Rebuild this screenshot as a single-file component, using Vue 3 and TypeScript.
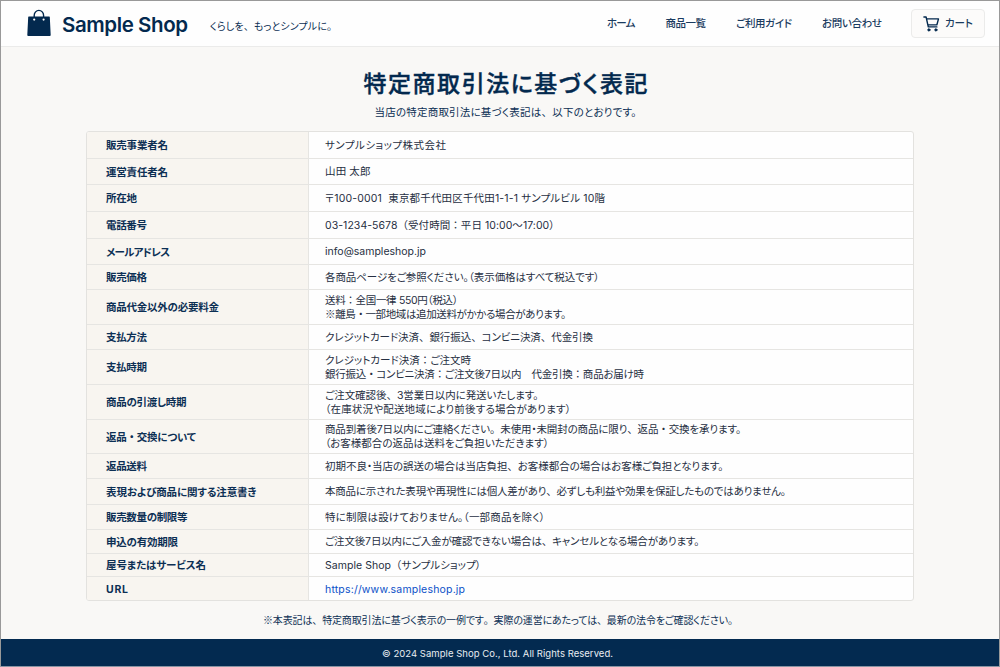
<script setup lang="ts">
import { h, withDirectives } from 'vue'
import type { Directive, FunctionalComponent } from 'vue'

interface Line {
  text: string
  width: number
  href?: string
}

interface Row {
  label: string
  labelWidth: number
  height: number
  lines: Line[]
}

// Tracks a line of text out (or in) so that it sets to the given measure.
const vFit: Directive<HTMLElement, number> = {
  mounted(el, { value }) {
    const gaps = Array.from(el.textContent ?? '').length - 1
    if (gaps < 1) return
    const spacing = (value - el.getBoundingClientRect().width) / gaps
    el.style.letterSpacing = `${spacing.toFixed(4)}px`
    el.style.marginRight = `${(-spacing).toFixed(4)}px`
  },
}

const WIDE = /(、|。(?!（|$)|(?<=[0-9a-z])（|：|(?<=[島込品])・|※)/

const FitText: FunctionalComponent<{ text: string; width: number }> = (props) => {
  const parts = props.text.split(WIDE).filter(Boolean)
  return withDirectives(
    h('span', { class: 'fit-text' }, parts.map((part) => h('span', { class: { wide: /^[、。（：・※]$/.test(part) } }, part))),
    [[vFit, props.width]],
  )
}
FitText.props = ['text', 'width']

const nav: Line[] = [
  { text: 'ホーム', width: 28.5 },
  { text: '商品一覧', width: 40.5 },
  { text: 'ご利用ガイド', width: 56 },
  { text: 'お問い合わせ', width: 60 },
]

const rows: Row[] = [
  { label: '販売事業者名', labelWidth: 62, height: 27, lines: [{ text: 'サンプルショップ株式会社', width: 121 }] },
  { label: '運営責任者名', labelWidth: 62, height: 26, lines: [{ text: '山田 太郎', width: 45.5 }] },
  { label: '所在地', labelWidth: 31, height: 27, lines: [{ text: '〒100-0001  東京都千代田区千代田1-1-1 サンプルビル 10階', width: 280 }] },
  { label: '電話番号', labelWidth: 41, height: 27, lines: [{ text: '03-1234-5678（受付時間：平日 10:00〜17:00）', width: 229.5 }] },
  { label: 'メールアドレス', labelWidth: 64, height: 26, lines: [{ text: 'info@sampleshop.jp', width: 101 }] },
  { label: '販売価格', labelWidth: 41, height: 25, lines: [{ text: '各商品ページをご参照ください。（表示価格はすべて税込です）', width: 274.5 }] },
  {
    label: '商品代金以外の必要料金', labelWidth: 113, height: 35,
    lines: [
      { text: '送料：全国一律 550円（税込）', width: 133 },
      { text: '※離島・一部地域は追加送料がかかる場合があります。', width: 241 },
    ],
  },
  { label: '支払方法', labelWidth: 41, height: 25, lines: [{ text: 'クレジットカード決済、銀行振込、コンビニ決済、代金引換', width: 268 }] },
  {
    label: '支払時期', labelWidth: 41, height: 35,
    lines: [
      { text: 'クレジットカード決済：ご注文時', width: 146 },
      { text: '銀行振込・コンビニ決済：ご注文後7日以内　代金引換：商品お届け時', width: 319 },
    ],
  },
  {
    label: '商品の引渡し時期', labelWidth: 80.5, height: 35,
    lines: [
      { text: 'ご注文確認後、3営業日以内に発送いたします。', width: 213.5 },
      { text: '（在庫状況や配送地域により前後する場合があります）', width: 246 },
    ],
  },
  {
    label: '返品・交換について', labelWidth: 90, height: 34,
    lines: [
      { text: '商品到着後7日以内にご連絡ください。未使用・未開封の商品に限り、返品・交換を承ります。', width: 416 },
      { text: '（お客様都合の返品は送料をご負担いただきます）', width: 224 },
    ],
  },
  { label: '返品送料', labelWidth: 41, height: 25, lines: [{ text: '初期不良・当店の誤送の場合は当店負担、お客様都合の場合はお客様ご負担となります。', width: 398.5 }] },
  { label: '表現および商品に関する注意書き', labelWidth: 150.5, height: 26, lines: [{ text: '本商品に示された表現や再現性には個人差があり、必ずしも利益や効果を保証したものではありません。', width: 461 }] },
  { label: '販売数量の制限等', labelWidth: 81.5, height: 25, lines: [{ text: '特に制限は設けておりません。（一部商品を除く）', width: 220 }] },
  { label: '申込の有効期限', labelWidth: 72, height: 24, lines: [{ text: 'ご注文後7日以内にご入金が確認できない場合は、キャンセルとなる場合があります。', width: 374.5 }] },
  { label: '屋号またはサービス名', labelWidth: 100, height: 23, lines: [{ text: 'Sample Shop（サンプルショップ）', width: 156 }] },
  { label: 'URL', labelWidth: 22, height: 24, lines: [{ text: 'https://www.sampleshop.jp', width: 140, href: 'https://www.sampleshop.jp' }] },
]
</script>

<template>
  <div class="page">
    <header class="header">
      <div class="brand">
        <svg class="bag" width="24" height="28" viewBox="0 0 24 28">
          <path d="M7.2 9V6.4a4.7 5 0 0 1 9.4 0V9" fill="none" stroke="#03294e" stroke-width="1.4" />
          <path d="M1.8 7.4h20.4a.6.6 0 0 1 .6.6l.9 18a.9.9 0 0 1-.9.9H1.2a.9.9 0 0 1-.9-.9l.9-18a.6.6 0 0 1 .6-.6z" fill="#03294e" />
          <circle cx="7.2" cy="10.6" r="1.1" fill="#fff" />
          <circle cx="16.6" cy="10.6" r="1.1" fill="#fff" />
        </svg>
        <FitText class="name" text="Sample Shop" :width="126" />
        <FitText class="tagline" text="くらしを、もっとシンプルに。" :width="122" />
      </div>
      <nav class="nav">
        <a v-for="item in nav" :key="item.text"><FitText :text="item.text" :width="item.width" /></a>
        <a class="cart">
          <svg width="17" height="16" viewBox="0 0 17 16" fill="none" stroke="#03294e" stroke-width="1.4" stroke-linecap="round" stroke-linejoin="round">
            <path d="M.9 1h2.2l2.2 9.9h8.6M3.5 2.9h12l-1.6 5.9-9 .1" />
            <circle cx="5.9" cy="13.9" r="1.1" fill="#03294e" stroke-width="1" />
            <circle cx="12.9" cy="13.9" r="1.1" fill="#03294e" stroke-width="1" />
          </svg>
          <FitText text="カート" :width="28" />
        </a>
      </nav>
    </header>

    <main class="main">
      <div class="heading">
        <h1 class="title"><FitText text="特定商取引法に基づく表記" :width="284" /></h1>
        <p class="lead"><FitText text="当店の特定商取引法に基づく表記は、以下のとおりです。" :width="262" /></p>
      </div>

      <dl class="table">
        <div v-for="row in rows" :key="row.label" class="row" :style="{ height: `${row.height}px` }">
          <dt class="label"><FitText :text="row.label" :width="row.labelWidth" /></dt>
          <dd class="value">
            <div v-for="line in row.lines" :key="line.text" class="line">
              <a v-if="line.href" class="url"><FitText :text="line.text" :width="line.width" /></a>
              <FitText v-else :text="line.text" :width="line.width" />
            </div>
          </dd>
        </div>
      </dl>

      <p class="note"><FitText text="※本表記は、特定商取引法に基づく表示の一例です。実際の運営にあたっては、最新の法令をご確認ください。" :width="470" /></p>
    </main>

    <footer class="footer"><FitText text="© 2024 Sample Shop Co., Ltd. All Rights Reserved." :width="231" /></footer>
  </div>
</template>

<style>
body {
  margin: 0;
}

.fit-text {
  display: inline-block;
  white-space: pre;
}

.wide {
  font-family: "Noto Sans CJK JP", sans-serif;
  font-feature-settings: normal;
  line-height: 0;
}
</style>

<style scoped>
.page {
  box-sizing: border-box;
  width: 1000px;
  height: 667px;
  overflow: hidden;
  display: flex;
  flex-direction: column;
  border: 1px solid #999;
  border-bottom-color: #8794a3;
  background: #f9f8f6;
  color: #0c2f54;
  font-family: Inter, "Noto Sans CJK JP", sans-serif;
  font-feature-settings: "palt";
  font-size: 10.5px;
}

.header {
  box-sizing: border-box;
  height: 46px;
  flex: none;
  display: flex;
  justify-content: space-between;
  background: #fefefe;
  border-bottom: 1px solid #ebebea;
}

.brand {
  display: flex;
  align-items: flex-start;
  padding-left: 26px;
}

.bag {
  margin-top: 8px;
}

.name {
  margin-left: 11px;
  margin-top: 9px;
  line-height: 30px;
  font-size: 20.5px;
  font-weight: 600;
  color: #03294e;
}

.tagline {
  margin-left: 22px;
  margin-top: 16px;
  line-height: 18px;
  font-size: 10px;
}

.nav {
  display: flex;
  align-items: center;
  gap: 30px;
  padding-right: 14px;
  color: #1a3b60;
  font-weight: 500;
  line-height: 14px;
}

.cart {
  box-sizing: border-box;
  width: 74px;
  height: 29px;
  display: flex;
  align-items: center;
  gap: 5px;
  margin-left: -1px;
  padding-left: 11px;
  border: 1px solid #ebebea;
  border-radius: 4px;
  background: #fcfbfa;
}

.main {
  flex: 1;
  display: flex;
  flex-direction: column;
  align-items: center;
}

.heading {
  padding-left: 11px;
  text-align: center;
}

.title {
  height: 36px;
  margin: 19px 0 0;
  line-height: 36px;
  font-size: 23px;
  font-weight: 500;
  -webkit-text-stroke: 0.4px #03294e;
  color: #03294e;
}

.lead {
  height: 18px;
  margin: 1px 0 0;
  line-height: 19px;
}

.table {
  box-sizing: border-box;
  width: 828px;
  margin: 10px 0 0;
  border: 1px solid #e3e2df;
  border-radius: 3px;
  overflow: hidden;
  background: #fefefe;
}

.row {
  box-sizing: border-box;
  display: flex;
  border-bottom: 1px solid #e6e5e2;
}

.row:last-child {
  border-bottom: 0;
  margin-bottom: -1px;
}

.label {
  box-sizing: border-box;
  width: 222px;
  flex: none;
  display: flex;
  align-items: center;
  padding-top: 2px;
  padding-left: 19px;
  border-right: 1px solid #e6e5e2;
  background: #f8f5f0;
  font-weight: 700;
  line-height: 14px;
}

.value {
  flex: 1;
  margin: 0;
  display: flex;
  flex-direction: column;
  justify-content: center;
  padding-top: 1px;
  padding-left: 16px;
  color: #262f42;
}

.line {
  height: 14px;
  line-height: 14px;
}

.url {
  color: #0b50c8;
}

.note {
  height: 18px;
  margin: 10px 0 0;
  padding-right: 4px;
  line-height: 18px;
  font-size: 10px;
}

.footer {
  box-sizing: border-box;
  height: 27px;
  flex: none;
  display: flex;
  align-items: center;
  justify-content: center;
  padding: 2px 5px 0 0;
  background: #032a50;
  color: #e8edf2;
  font-size: 9.5px;
}
</style>
